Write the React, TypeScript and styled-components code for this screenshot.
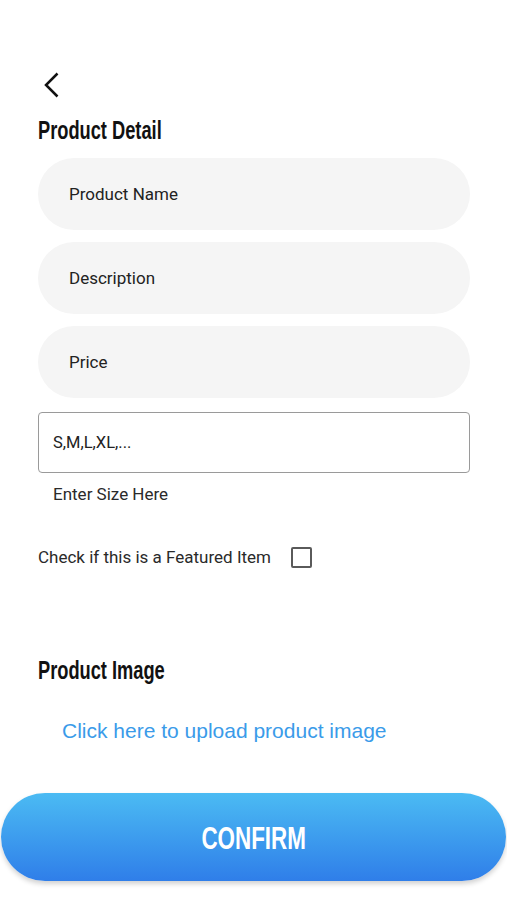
import styled, { createGlobalStyle } from 'styled-components';

const GlobalStyle = createGlobalStyle`
  body {
    margin: 0;
    background: #ffffff;
    font-family: Roboto, "Liberation Sans", sans-serif;
    color: #222222;
  }
`;

const Page = styled.div`
  width: 507px;
  min-height: 900px;
  display: flex;
  flex-direction: column;
  background: #ffffff;
`;

const Form = styled.div`
  display: flex;
  flex-direction: column;
  padding: 0 37px 0 38px;
`;

const BackButton = styled.button`
  display: flex;
  align-items: center;
  width: 24px;
  height: 26px;
  margin: 72px 0 0 5px;
  padding: 0;
  border: none;
  background: none;
  cursor: pointer;
`;

const SectionTitle = styled.h2<{ $top: number }>`
  margin: ${({ $top }) => $top}px 0 0;
  font-family: "Liberation Sans", Arial, sans-serif;
  font-weight: 700;
  font-size: 25px;
  line-height: 28px;
  color: #111111;
`;

// no condensed face installed, so squeeze the bold sans horizontally
const Narrow = styled.span<{ $scale: number }>`
  display: inline-block;
  transform: scaleX(${({ $scale }) => $scale});
  transform-origin: left center;
  white-space: nowrap;
`;

const Fields = styled.div`
  display: flex;
  flex-direction: column;
  gap: 12px;
  margin-top: 14px;
`;

const PillInput = styled.div`
  display: flex;
  align-items: center;
  height: 72px;
  padding-left: 31px;
  border-radius: 36px;
  background: #f5f5f5;
  font-size: 17px;
  color: #222222;
`;

const SizeInput = styled.div`
  display: flex;
  align-items: center;
  height: 59px;
  margin-top: 14px;
  padding-left: 14px;
  border: 1px solid #9a9a9a;
  border-radius: 4px;
  font-size: 16.5px;
  color: #222222;
`;

const Hint = styled.div`
  margin-top: 11px;
  padding-left: 15px;
  font-size: 17px;
  line-height: 20px;
  color: #2a2a2a;
`;

const CheckRow = styled.label`
  display: flex;
  align-items: center;
  gap: 20px;
  height: 22px;
  margin-top: 42px;
  font-size: 17px;
  color: #2a2a2a;
`;

const CheckBox = styled.span`
  display: block;
  width: 17px;
  height: 17px;
  border: 2px solid #5a5a5a;
  border-radius: 2px;
`;

const UploadLink = styled.a`
  margin-top: 35px;
  padding-left: 24px;
  font-family: "Liberation Sans", Arial, sans-serif;
  font-size: 21px;
  line-height: 24px;
  color: #3a9be9;
  text-decoration: none;
  cursor: pointer;
`;

const ConfirmButton = styled.button`
  display: flex;
  align-items: center;
  justify-content: center;
  height: 88px;
  margin: 50px 1px 0;
  padding-top: 3px;
  border: none;
  border-radius: 44px;
  background: linear-gradient(180deg, #4bbbf3 0%, #2f7ee9 100%);
  box-shadow: 0 3px 5px rgba(0, 0, 0, 0.18);
  font-family: "Liberation Sans", Arial, sans-serif;
  font-weight: 700;
  font-size: 32px;
  color: #ffffff;
  cursor: pointer;
`;

const ButtonLabel = styled.span`
  display: inline-block;
  transform: scaleX(0.7);
`;

export default function App() {
  return (
    <Page>
      <GlobalStyle />
      <Form>
        <BackButton aria-label="Back">
          <svg width="16" height="26" viewBox="0 0 16 26" fill="none">
            <path d="M14.5 1.5 L3 13 L14.5 24.5" stroke="#111" strokeWidth="2.5" />
          </svg>
        </BackButton>
        <SectionTitle $top={18}>
          <Narrow $scale={0.73}>Product Detail</Narrow>
        </SectionTitle>
        <Fields>
          <PillInput>Product Name</PillInput>
          <PillInput>Description</PillInput>
          <PillInput>Price</PillInput>
        </Fields>
        <SizeInput>S,M,L,XL,...</SizeInput>
        <Hint>Enter Size Here</Hint>
        <CheckRow>
          Check if this is a Featured Item
          <CheckBox />
        </CheckRow>
        <SectionTitle $top={88}>
          <Narrow $scale={0.73}>Product Image</Narrow>
        </SectionTitle>
        <UploadLink>Click here to upload product image</UploadLink>
      </Form>
      <ConfirmButton>
        <ButtonLabel>CONFIRM</ButtonLabel>
      </ConfirmButton>
    </Page>
  );
}
